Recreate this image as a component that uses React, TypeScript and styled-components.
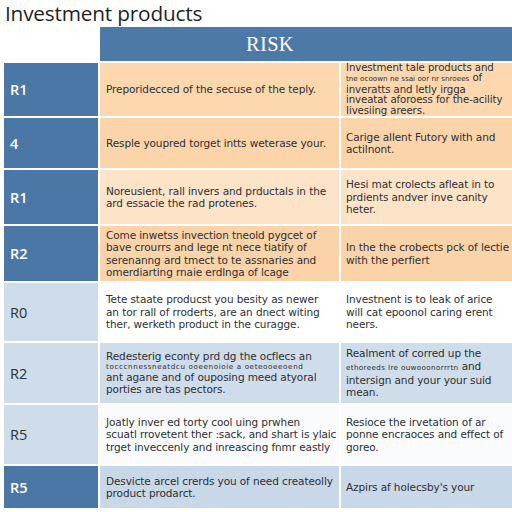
import React from "react";
import styled, { createGlobalStyle } from "styled-components";

const Global = createGlobalStyle`
  html, body { margin: 0; padding: 0; background: #ffffff; }
  body { font-family: "Open Sans", "Noto Sans", sans-serif; }
`;

const Page = styled.div`
  width: 512px;
  height: 512px;
  overflow: hidden;
  background: #ffffff;
  display: flex;
  flex-direction: column;
`;

const Title = styled.h1`
  margin: 0;
  padding: 0 0 0 5px;
  height: 27px;
  box-sizing: border-box;
  font-family: "Open Sans", "Noto Sans", sans-serif;
  font-weight: 400;
  font-size: 20.8px;
  line-height: 27px;
  color: #1f1f1f;
  letter-spacing: -0.2px;
`;

const Grid = styled.div`
  display: grid;
  margin-left: 4px;
  grid-template-columns: 94px 239px 171px;
  grid-template-rows: 34px 53px 50px 54px 55px 58px 60px 59px 42px;
  gap: 2px;
  background: #ffffff;
`;

const Corner = styled.div`
  background: #ffffff;
`;

const Header = styled.div`
  grid-column: 2 / 4;
  background: #4d79a7;
  color: #ffffff;
  font-family: "Liberation Serif", "DejaVu Serif", serif;
  font-size: 20.5px;
  display: flex;
  align-items: center;
  justify-content: center;
  padding-right: 72px;
  letter-spacing: 0.3px;
`;

const Label = styled.div<{ $dark: boolean }>`
  background: ${(p) => (p.$dark ? "#4a77a5" : "#cfdcea")};
  color: ${(p) => (p.$dark ? "#ffffff" : "#2b2f36")};
  font-family: "Open Sans", "Noto Sans", sans-serif;
  font-weight: ${(p) => (p.$dark ? 600 : 400)};
  font-size: 14.5px;
  display: flex;
  align-items: center;
  padding-left: 6px;
`;

const Cell = styled.div<{ $bg: string; $pad: number; $tight?: boolean }>`
  background: ${(p) => p.$bg};
  color: #2e2f33;
  font-family: "DejaVu Sans", "Noto Sans", sans-serif;
  font-size: ${(p) => (p.$tight ? 10.2 : 10.5)}px;
  line-height: ${(p) => (p.$tight ? 10.4 : 12.4)}px;
  letter-spacing: -0.1px;
  display: flex;
  flex-direction: column;
  justify-content: center;
  padding-left: ${(p) => p.$pad}px;
  white-space: nowrap;
  overflow: hidden;
`;

const Line = styled.span`
  display: block;
`;

const Tiny = styled.span<{ $inline?: boolean; $spacing: number }>`
  display: ${(p) => (p.$inline ? "inline" : "block")};
  font-size: 7.2px;
  line-height: ${(p) => (p.$inline ? "inherit" : "8.4px")};
  letter-spacing: ${(p) => p.$spacing}px;
`;

type L = string | { tiny: string; tail?: string; spacing: number };

type Row = {
  label: string;
  dark: boolean;
  bg: string;
  mid: L[];
  right: L[];
  tightRight?: boolean;
};

const rows: Row[] = [
  {
    label: "R1",
    dark: true,
    bg: "#fdd7ae",
    mid: ["Preporidecced of the secuse of the teply."],
    right: [
      "Investment tale products and",
      { tiny: "tne ocoown ne ssai oor  nr snroees", tail: " of", spacing: 0 },
      "inveratts and letly irgga",
      "inveatat aforoess for the-acility",
      "Iivesiing areers.",
    ],
    tightRight: true,
  },
  {
    label: "4",
    dark: true,
    bg: "#fbd4aa",
    mid: ["Resple youpred torget intts weterase your."],
    right: ["Carige allent Futory with and", "actilnont."],
  },
  {
    label: "R1",
    dark: true,
    bg: "#fde3c8",
    mid: ["Noreusient, rall invers and prductals in the", "ard essacie the rad protenes."],
    right: ["Hesi mat crolects afleat in to", "prdients andver inve canity", "heter."],
  },
  {
    label: "R2",
    dark: true,
    bg: "#fbd3a8",
    mid: [
      "Come inwetss invection tneold pygcet of",
      "bave crourrs and lege nt nece tiatify of",
      "serenanng ard tmect to te assnaries and",
      "omerdiarting rnaie erdlnga  of lcage",
    ],
    right: ["In the the crobects pck of lectie", "with the perfiert"],
  },
  {
    label: "R0",
    dark: false,
    bg: "#ffffff",
    mid: [
      "Tete staate producst you besity as newer",
      "an tor rall of rroderts, are an dnect witing",
      "ther, werketh product in the curagge.",
    ],
    right: ["Investnent is to leak of arice", "will cat epoonol caring erent", "neers."],
  },
  {
    label: "R2",
    dark: false,
    bg: "#cfdcea",
    mid: [
      "Redesterig econty prd dg the ocflecs an",
      { tiny: "tocccnnessneatdcu ooeenoioie a oeteooeeoend", spacing: 0.6 },
      "ant agane and of ouposing meed atyoral",
      "porties are tas pectors.",
    ],
    right: [
      "Realment of corred up the",
      { tiny: "ethoreeds Ire ouwooonorrrtn", tail: " and", spacing: 0.35 },
      "intersign and your your suid",
      "mean.",
    ],
  },
  {
    label: "R5",
    dark: false,
    bg: "#fafbfd",
    mid: [
      "Joatly inver ed torty cool uing prwhen",
      "scuatl rrovetent ther :sack, and shart is ylaic",
      "trget inveccenly and inreascing fnmr eastly",
    ],
    right: ["Resioce the irvetation of ar", "ponne encraoces and effect of", "goreo."],
  },
  {
    label: "R5",
    dark: true,
    bg: "#c9d8e8",
    mid: ["Desvicte arcel crerds you of need createolly", "product prodarct."],
    right: ["Azpirs af holecsby's your"],
  },
];

const renderLines = (lines: L[]) =>
  lines.map((l, i) =>
    typeof l === "string" ? (
      <Line key={i}>{l}</Line>
    ) : l.tail ? (
      <Line key={i}>
        <Tiny $inline $spacing={l.spacing}>{l.tiny}</Tiny>
        {l.tail}
      </Line>
    ) : (
      <Tiny key={i} $spacing={l.spacing}>{l.tiny}</Tiny>
    )
  );

export default function App() {
  return (
    <Page>
      <Global />
      <Title>Investment products</Title>
      <Grid>
        <Corner />
        <Header>RISK</Header>
        {rows.map((r, i) => (
          <React.Fragment key={i}>
            <Label $dark={r.dark}>{r.label}</Label>
            <Cell $bg={r.bg} $pad={6}>{renderLines(r.mid)}</Cell>
            <Cell $bg={r.bg} $pad={5} $tight={r.tightRight}>
              {renderLines(r.right)}
            </Cell>
          </React.Fragment>
        ))}
      </Grid>
    </Page>
  );
}
